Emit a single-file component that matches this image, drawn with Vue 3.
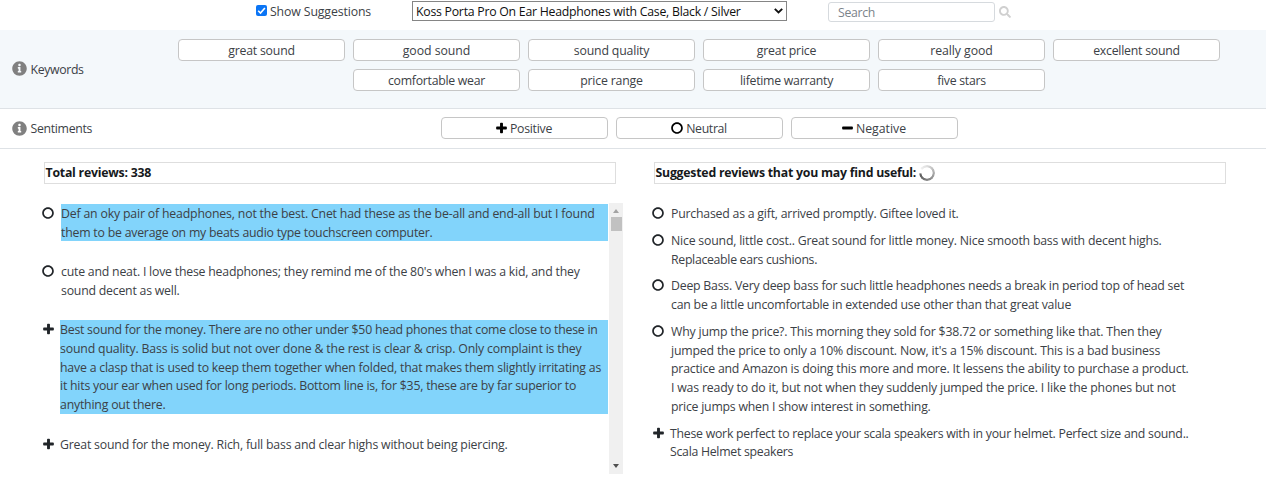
<script setup>
import { h } from 'vue'

const paths = {
  plus: 'M420 194H286V60c0-17.67-14.33-32-32-32h-60c-17.67 0-32 14.33-32 32v134H28c-17.67 0-32 14.33-32 32v60c0 17.67 14.33 32 32 32h134v134c0 17.67 14.33 32 32 32h60c17.67 0 32-14.33 32-32V318h134c17.67 0 32-14.33 32-32v-60c0-17.67-14.33-32-32-32z',
  minus: 'M420 194H28c-17.67 0-32 14.33-32 32v60c0 17.67 14.33 32 32 32h392c17.67 0 32-14.33 32-32v-60c0-17.67-14.33-32-32-32z',
  circle: 'M256 8C119 8 8 119 8 256s111 248 248 248 248-111 248-248S393 8 256 8zm0 424c-97 0-176-79-176-176S159 80 256 80s176 79 176 176-79 176-176 176z',
  info: 'M256 8C119 8 8 119 8 256s111 248 248 248 248-111 248-248S393 8 256 8zm0 86c24 0 43 19 43 43s-19 43-43 43-43-19-43-43 19-43 43-43zm58 290c0 7-5 12-12 12h-92c-7 0-12-5-12-12v-34c0-7 5-12 12-12h14v-76h-14c-7 0-12-5-12-12v-34c0-7 5-12 12-12h66c7 0 12 5 12 12v122h14c7 0 12 5 12 12v34z',
  search: 'M505 442.7L405.300 343c-4.500-4.500-10.600-7-17-7H372c27.600-35.300 44-79.700 44-128C416 93.100 322.900 0 208 0S0 93.100 0 208s93.100 208 208 208c48.300 0 92.700-16.400 128-44v16.300c0 6.400 2.500 12.500 7 17l99.700 99.700c9.400 9.400 24.600 9.400 33.900 0l28.300-28.300c9.400-9.400 9.400-24.600.1-34zM208 336c-70.700 0-128-57.200-128-128 0-70.700 57.200-128 128-128 70.700 0 128 57.200 128 128 0 70.700-57.200 128-128 128z',
}
const narrow = ['plus', 'minus']
const Icon = ({ name }) =>
  h('svg', { viewBox: narrow.includes(name) ? '-4 0 456 512' : '0 0 512 512', fill: 'currentColor' }, [
    h('path', { d: paths[name] }),
  ])
Icon.props = ['name']

// Tracks the letters of a line so that it fills its measure.
const vFit = {
  mounted(el, { value }) {
    const natural = el.getBoundingClientRect().width
    el.style.letterSpacing = `${(value + 0.6 - natural) / el.textContent.length}px`
  },
}

const keywordRows = [
  [['great sound', 66], ['good sound', 67], ['sound quality', 75], ['great price', 59], ['really good', 62], ['excellent sound', 86]],
  [['comfortable wear', 96.5], ['price range', 62], ['lifetime warranty', 92.5], ['five stars', 48]],
]
const sentiments = [
  ['plus', 'Positive', 41.5],
  ['circle', 'Neutral', 40],
  ['minus', 'Negative', 49.5],
]
const reviews = [
  { icon: 'circle', marked: true, lines: [
    ['Def an oky pair of headphones, not the best. Cnet had these as the be-all and end-all but I found', 533],
    ['them to be average on my beats audio type touchscreen computer.', 371],
  ] },
  { icon: 'circle', lines: [
    ["cute and neat. I love these headphones; they remind me of the 80's when I was a kid, and they", 518],
    ['sound decent as well.', 118],
  ] },
  { icon: 'plus', marked: true, lines: [
    ['Best sound for the money. There are no other under $50 head phones that come close to these in', 537],
    ['sound quality. Bass is solid but not over done & the rest is clear & crisp. Only complaint is they', 521],
    ['have a clasp that is used to keep them together when folded, that makes them slightly irritating as', 540.5],
    ['it hits your ear when used for long periods. Bottom line is, for $35, these are by far superior to', 515.5],
    ['anything out there.', 105],
  ] },
  { icon: 'plus', lines: [
    ['Great sound for the money. Rich, full bass and clear highs without being piercing.', 447],
  ] },
]
const suggested = [
  { icon: 'circle', lines: [['Purchased as a gift, arrived promptly. Giftee loved it.', 287]] },
  { icon: 'circle', lines: [
    ['Nice sound, little cost.. Great sound for little money. Nice smooth bass with decent highs.', 490],
    ['Replaceable ears cushions.', 145.5],
  ] },
  { icon: 'circle', lines: [
    ['Deep Bass. Very deep bass for such little headphones needs a break in period top of head set', 512.5],
    ['can be a little uncomfortable in extended use other than that great value', 399.5],
  ] },
  { icon: 'circle', lines: [
    ['Why jump the price?. This morning they sold for $38.72 or something like that. Then they', 490],
    ["jumped the price to only a 10% discount. Now, it's a 15% discount. This is a bad business", 488.5],
    ['practice and Amazon is doing this more and more. It lessens the ability to purchase a product.', 517],
    ['I was ready to do it, but not when they suddenly jumped the price. I like the phones but not', 504],
    ['price jumps when I show interest in something.', 259],
  ] },
  { icon: 'plus', lines: [
    ['These work perfect to replace your scala speakers with in your helmet. Perfect size and sound..', 518],
    ['Scala Helmet speakers', 122.5],
  ] },
]
</script>

<template>
  <div class="page">
    <header class="topbar">
      <label class="toggle">
        <span class="checkbox">
          <svg viewBox="0 0 11 11"><path d="M2.200 5.700 4.500 8 8.900 2.900" fill="none" stroke="#fff" stroke-width="1.600" /></svg>
        </span>
        <span v-fit="100.5">Show Suggestions</span>
      </label>
      <div class="select">
        <span v-fit="324">Koss Porta Pro On Ear Headphones with Case, Black / Silver</span>
        <svg viewBox="0 0 9 6"><path d="M.8.8 4.500 4.500 8.200.8" fill="none" stroke="#111" stroke-width="1.900" /></svg>
      </div>
      <div class="search"><span v-fit="36.5">Search</span></div>
      <Icon name="search" class="search-icon" />
    </header>

    <section class="filter keywords">
      <div class="label"><Icon name="info" class="info" /><span v-fit="52.5">Keywords</span></div>
      <div class="rows">
        <div v-for="(row, i) in keywordRows" :key="i" class="chips">
          <button v-for="[text, w] in row" :key="text" class="chip"><span v-fit="w">{{ text }}</span></button>
        </div>
      </div>
    </section>

    <section class="filter sentiments">
      <div class="label"><Icon name="info" class="info" /><span v-fit="61">Sentiments</span></div>
      <div class="rows">
        <div class="chips">
          <button v-for="[icon, text, w] in sentiments" :key="text" class="chip">
            <Icon :name="icon" class="mood" :class="icon" /><span v-fit="w">{{ text }}</span>
          </button>
        </div>
      </div>
    </section>

    <main class="columns">
      <section class="column">
        <h2 class="title"><span v-fit="105">Total reviews: 338</span></h2>
        <div class="pane">
          <ul class="list all">
            <li v-for="(r, i) in reviews" :key="i" class="review" :class="r.icon">
              <Icon :name="r.icon" class="mark" />
              <p class="body" :class="{ marked: r.marked }">
                <span v-for="[text, w] in r.lines" :key="text" class="line"><span v-fit="w">{{ text }}</span></span>
              </p>
            </li>
          </ul>
          <div class="scrollbar">
            <i class="arrow up"></i>
            <i class="thumb"></i>
            <i class="arrow down"></i>
          </div>
        </div>
      </section>

      <section class="column">
        <h2 class="title">
          <span v-fit="260">Suggested reviews that you may find useful:</span>
          <i class="spinner"></i>
        </h2>
        <ul class="list suggested">
          <li v-for="(r, i) in suggested" :key="i" class="review" :class="r.icon">
            <Icon :name="r.icon" class="mark" />
            <p class="body">
              <span v-for="[text, w] in r.lines" :key="text" class="line"><span v-fit="w">{{ text }}</span></span>
            </p>
          </li>
        </ul>
      </section>
    </main>
  </div>
</template>

<style>
body {
  background: #fff;
  overflow: hidden;
}
</style>

<style scoped>
.page {
  box-sizing: border-box;
  width: 1266px;
  height: 479px;
  overflow: hidden;
  font-family: "Open Sans", "Noto Sans", sans-serif;
  font-size: 12.3px;
  line-height: 18.7px;
  color: #3c4146;
  white-space: nowrap;
}
.page * {
  box-sizing: border-box;
}
.topbar {
  display: flex;
  align-items: flex-start;
  height: 30px;
  padding-left: 256px;
}
.toggle {
  display: flex;
  gap: 3px;
  width: 156px;
  padding-top: 3px;
}
.checkbox {
  width: 11px;
  height: 11px;
  margin-top: 2px;
  border-radius: 2px;
  background: #0b75f5;
}
.checkbox svg {
  display: block;
}
.select {
  display: flex;
  align-items: center;
  justify-content: space-between;
  width: 375px;
  height: 20px;
  margin-top: 1px;
  padding: 0 3px;
  border: 1px solid #858585;
  color: #101010;
}
.select span,
.search span,
.label span,
.chip span {
  padding-top: 2px;
}
.select svg {
  width: 9px;
  height: 6px;
}
.search {
  display: flex;
  align-items: center;
  width: 167px;
  height: 20px;
  margin: 2px 0 0 41px;
  padding-left: 9px;
  border: 1px solid #d6dade;
  border-radius: 3px;
  color: #7b838a;
}
.search-icon {
  width: 12px;
  height: 12px;
  margin: 6px 0 0 4px;
  color: #d0d0d0;
}
.filter {
  display: flex;
  align-items: center;
  padding-left: 12px;
  border-bottom: 1px solid #dee2e6;
}
.keywords {
  height: 79px;
  background: #f4f8fb;
}
.sentiments {
  height: 40px;
}
.label {
  display: flex;
  align-items: center;
  gap: 4px;
  width: 120px;
}
.info {
  width: 15px;
  height: 15px;
  margin-left: -0.5px;
  color: #808080;
}
.rows {
  display: flex;
  flex-direction: column;
  gap: 8px;
  width: 1134px;
}
.keywords .rows {
  align-self: flex-start;
  padding-top: 9px;
}
.sentiments .rows {
  margin-top: -1px;
}
.chips {
  display: flex;
  justify-content: center;
  gap: 8px;
}
.chip {
  display: flex;
  align-items: center;
  justify-content: center;
  width: 167px;
  height: 22px;
  padding: 0;
  border: 1px solid #c6c6c6;
  border-radius: 4px;
  background: #fff;
  color: #3c4146;
  font: inherit;
}
.mood {
  width: 11px;
  height: 12px;
  margin-right: 3px;
  color: #000;
}
.mood.circle {
  width: 12px;
}
.columns {
  display: flex;
  gap: 38px;
  padding: 13px 0 0 44px;
}
.column {
  width: 572px;
}
.title {
  display: flex;
  align-items: center;
  gap: 4px;
  height: 22px;
  margin: 0;
  padding-left: 0.5px;
  border: 1px solid #dedede;
  color: #16191c;
  font-size: 12.3px;
  line-height: 18.7px;
}
.title span {
  padding-top: 1px;
}
.spinner {
  width: 16px;
  height: 16px;
  margin-left: -1px;
  border-radius: 50%;
  background: conic-gradient(#ddd 0deg, #999 120deg, #606060 250deg, #606060 264deg, transparent 268deg, transparent 300deg, #eee 310deg, #ddd 360deg);
  -webkit-mask: radial-gradient(circle, transparent 5.300px, #000 5.900px);
  mask: radial-gradient(circle, transparent 5.300px, #000 5.900px);
}
.pane {
  display: flex;
  width: 579px;
  height: 271px;
  margin-top: 19px;
}
.list {
  display: flex;
  flex-direction: column;
  width: 564px;
  margin: 0;
  padding: 0;
  list-style: none;
}
.all {
  gap: 20.8px;
  height: 271px;
  padding-top: 1px;
}
.suggested {
  gap: 8.2px;
  margin-top: 20px;
}
.review {
  display: flex;
  padding-left: 17px;
}
.review.plus {
  padding-left: 16px;
}
.mark {
  flex: none;
  width: 12px;
  height: 12px;
  margin: 3px 7px 0 -19px;
  color: #212529;
}
.review.plus .mark {
  width: 11px;
  margin: 3px 6.5px 0 -17.5px;
}
.body {
  flex: 1;
  margin: 0;
}
.body.marked {
  background: #82d4fb;
}
.line {
  display: block;
  height: 18.7px;
  line-height: 20.7px;
}
.scrollbar {
  display: flex;
  flex-direction: column;
  align-items: center;
  width: 14px;
  height: 271px;
  margin-left: 1px;
  background: #f0f0f0;
}
.arrow {
  width: 0;
  height: 0;
  border: 3px solid transparent;
}
.arrow.up {
  margin-top: 3px;
  border-bottom: 4px solid #a3a3a3;
}
.arrow.down {
  margin: auto 0 3px;
  border-top: 4px solid #505050;
}
.thumb {
  width: 11px;
  height: 14px;
  margin-top: 4px;
  background: #c1c1c1;
}
</style>
